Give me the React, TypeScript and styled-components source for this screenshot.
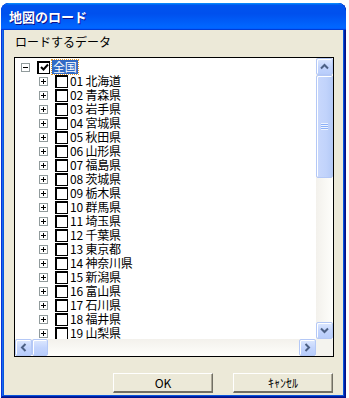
import styled, { createGlobalStyle } from 'styled-components';

const PREFS = [
  '北海道', '青森県', '岩手県', '宮城県', '秋田県', '山形県', '福島県', '茨城県', '栃木県', '群馬県',
  '埼玉県', '千葉県', '東京都', '神奈川県', '新潟県', '富山県', '石川県', '福井県', '山梨県',
];

const GlobalStyle = createGlobalStyle`
  html, body {
    margin: 0;
    background: #fff;
  }
  body {
    font-family: Tahoma, "DejaVu Sans", "Noto Sans CJK JP", sans-serif;
    font-size: 12px;
  }
`;

function Expander({ open }: { open?: boolean }) {
  return (
    <ExpanderBox>
      <svg width="9" height="9" viewBox="0 0 9 9">
        <rect x="0.5" y="0.5" width="8" height="8" fill="#fff" stroke="#919B9C" />
        <path d="M2 4.5h5" stroke="#000" />
        {!open && <path d="M4.5 2v5" stroke="#000" />}
      </svg>
    </ExpanderBox>
  );
}

function Check({ checked }: { checked?: boolean }) {
  return (
    <CheckBox>
      {checked && (
        <svg width="9" height="9" viewBox="0 0 9 9">
          <path d="M1 4l2.5 2.5L8 1.5" stroke="#000" strokeWidth="2" fill="none" />
        </svg>
      )}
    </CheckBox>
  );
}

function Arrow({ dir }: { dir: 'up' | 'down' | 'left' | 'right' }) {
  const rot = { up: 0, right: 90, down: 180, left: 270 }[dir];
  return (
    <svg width="9" height="9" viewBox="0 0 9 9" style={{ transform: `rotate(${rot}deg)` }}>
      <path d="M1 6.5L4.5 3 8 6.5" stroke="#4D6185" strokeWidth="2" fill="none" />
    </svg>
  );
}

export default function App() {
  return (
    <>
      <GlobalStyle />
      <Window>
        <TitleBar>地図のロード</TitleBar>
        <Client>
          <GroupLabel>ロードするデータ</GroupLabel>
          <TreeBox>
            <TreeArea>
              <Row indent={6}>
                <Expander open />
                <Check checked />
                <RootLabel>全国</RootLabel>
              </Row>
              {PREFS.map((name, i) => (
                <Row key={name} indent={24}>
                  <Expander />
                  <Check />
                  <ItemLabel>
                    {String(i + 1).padStart(2, '0')} {name}
                  </ItemLabel>
                </Row>
              ))}
            </TreeArea>
            <VScroll>
              <ScrollButton>
                <Arrow dir="up" />
              </ScrollButton>
              <VThumb>
                <Grip />
              </VThumb>
              <Spacer />
              <ScrollButton>
                <Arrow dir="down" />
              </ScrollButton>
            </VScroll>
            <HScroll>
              <ScrollButton>
                <Arrow dir="left" />
              </ScrollButton>
              <HThumb />
              <Spacer />
              <ScrollButton>
                <Arrow dir="right" />
              </ScrollButton>
            </HScroll>
            <Corner />
          </TreeBox>
          <ButtonRow>
            <Button>OK</Button>
            <Button>ｷｬﾝｾﾙ</Button>
          </ButtonRow>
        </Client>
      </Window>
    </>
  );
}

const Window = styled.div`
  width: 345px;
  height: 395px;
  margin: 3px 0 0 1px;
  box-sizing: border-box;
  padding: 0 3px 3px;
  display: flex;
  flex-direction: column;
  border-radius: 8px 8px 0 0;
  background: #0855dd;
  box-shadow: inset -1px -1px #00138c, inset 1px 1px #0831d9, inset -2px -2px #001ea0, inset 2px 2px #166aee;
  overflow: hidden;
`;

const TitleBar = styled.div`
  height: 27px;
  margin: 0 -3px;
  padding-left: 8px;
  display: flex;
  align-items: center;
  color: #fff;
  font-weight: bold;
  font-size: 13px;
  font-family: "Noto Sans CJK JP", sans-serif;
  text-shadow: 1px 1px #0f1089;
  border-radius: 8px 8px 0 0;
  background: linear-gradient(
    180deg,
    #0997ff,
    #0053ee 8%,
    #0050ee 40%,
    #06f 88%,
    #06f 93%,
    #005bff 95%,
    #003dd7 96%,
    #003dd7
  );
`;

const Client = styled.div`
  flex: 1;
  background: #ece9d8;
  padding: 4px 9px 0 10px;
  display: flex;
  flex-direction: column;
`;

const GroupLabel = styled.div`
  height: 16px;
  line-height: 16px;
  padding-left: 1px;
  margin-bottom: 7px;
  font-family: "Noto Sans CJK JP", sans-serif;
  font-size: 12px;
  color: #000;
`;

const TreeBox = styled.div`
  height: 300px;
  box-sizing: border-box;
  border: 1px solid #000;
  background: #fff;
  display: grid;
  grid-template-columns: 1fr 17px;
  grid-template-rows: 1fr 17px;
`;

const TreeArea = styled.div`
  padding-top: 2px;
  overflow: hidden;
`;

const Row = styled.div<{ indent: number }>`
  height: 14px;
  display: flex;
  align-items: center;
  padding-left: ${(p) => p.indent}px;
  white-space: nowrap;
`;

const ExpanderBox = styled.span`
  display: flex;
  width: 9px;
  height: 9px;
  margin-right: 7px;
`;

const CheckBox = styled.span`
  box-sizing: border-box;
  width: 13px;
  height: 13px;
  border: 1px solid #000;
  box-shadow: inset 1px 1px #000;
  background: #fff;
  display: flex;
  align-items: center;
  justify-content: center;
  padding: 1px 0 0 1px;
`;

const ItemLabel = styled.span`
  margin-left: 2px;
  font-family: "Noto Sans CJK JP", sans-serif;
  font-size: 12px;
  line-height: 14px;
  color: #000;
  letter-spacing: -0.2px;
`;

const RootLabel = styled(ItemLabel)`
  margin-left: 2px;
  padding: 0 1px;
  background: #316ac5;
  color: #fff;
  outline: 1px dotted #e09a30;
`;

const scrollFace = `
  box-sizing: border-box;
  border: 1px solid #b4c8f6;
  border-radius: 2px;
  background: linear-gradient(180deg, #dde8fe, #c4d5fd 50%, #b8cdfb);
  box-shadow: inset 1px 1px #fff;
`;

const VScroll = styled.div`
  display: flex;
  flex-direction: column;
  background: linear-gradient(90deg, #f3f1ec, #fefefb);
`;

const HScroll = styled.div`
  display: flex;
  background: linear-gradient(180deg, #f3f1ec, #fefefb);
`;

const Corner = styled.div`
  background: #f4f3ee;
`;

const ScrollButton = styled.div`
  ${scrollFace}
  width: 17px;
  height: 17px;
  flex: none;
  display: flex;
  align-items: center;
  justify-content: center;
`;

const VThumb = styled.div`
  ${scrollFace}
  height: 103px;
  display: flex;
  align-items: center;
  justify-content: center;
  background: linear-gradient(90deg, #c9d8fc, #c1d3fb 60%, #b6cbf7);
`;

const HThumb = styled.div`
  ${scrollFace}
  width: 16px;
`;

const Grip = styled.div`
  width: 7px;
  height: 7px;
  background: repeating-linear-gradient(180deg, #eef4fe 0 1px, #8cb0f8 1px 2px);
`;

const Spacer = styled.div`
  flex: 1;
`;

const ButtonRow = styled.div`
  margin-top: 16px;
  display: flex;
  justify-content: flex-end;
  gap: 20px;
  padding-right: 1px;
`;

const Button = styled.div`
  box-sizing: border-box;
  width: 100px;
  height: 20px;
  display: flex;
  align-items: center;
  justify-content: center;
  background: #ece9d8;
  border-top: 1px solid #fff;
  border-left: 1px solid #fff;
  border-right: 1px solid #716f64;
  border-bottom: 2px solid #716f64;
  box-shadow: inset -1px 0 #aca899;
  font-family: "Noto Sans CJK JP", sans-serif;
  font-size: 12px;
  color: #000;
`;
